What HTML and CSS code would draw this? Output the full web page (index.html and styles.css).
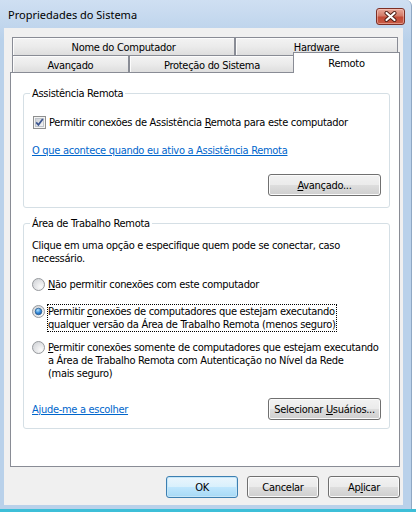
FILE: index.html
```html
<!DOCTYPE html>
<html lang="pt-BR">
  <head>
    <meta charset="UTF-8">
    <title>Propriedades do Sistema</title>
    <link rel="stylesheet" href="styles.css">
  </head>
  <body>

    <div class="window">
      <header class="titlebar">
        <span class="title">Propriedades do Sistema</span>
        <button class="close" aria-label="Fechar">
          <svg width="15" height="11" viewBox="0 0 15 11">
            <path d="M3.5 2 L11.5 9 M11.5 2 L3.5 9" stroke="#4a1c14" stroke-width="4" stroke-linecap="round"/>
            <path d="M3.5 2 L11.5 9 M11.5 2 L3.5 9" stroke="#ffffff" stroke-width="2.2" stroke-linecap="round"/>
          </svg>
        </button>
      </header>

      <main class="client">
        <nav class="tabstrip">
          <div class="tab-row">
            <span class="tab tab-name">Nome do Computador</span>
            <span class="tab tab-hw">Hardware</span>
          </div>
          <div class="tab-row">
            <span class="tab tab-adv">Avançado</span>
            <span class="tab tab-prot">Proteção do Sistema</span>
            <span class="tab tab-remote is-active">Remoto</span>
          </div>
        </nav>

        <section class="panel">
          <fieldset class="group group-assist">
            <legend>Assistência Remota</legend>
            <label class="check">
              <svg class="box" width="13" height="13" viewBox="0 0 13 13">
                <defs>
                  <linearGradient id="cb" x1="0" y1="0" x2="1" y2="1">
                    <stop offset="0" stop-color="#cbcfd5"/>
                    <stop offset="1" stop-color="#f6f6f6"/>
                  </linearGradient>
                </defs>
                <rect x="0.5" y="0.5" width="12" height="12" fill="#f4f4f4" stroke="#8e8f8f"/>
                <rect x="2.5" y="2.5" width="8" height="8" fill="url(#cb)" stroke="#bfc4ca"/>
                <path d="M3.2 6.4 L5.4 8.8 L9.8 3" stroke="#3b5590" stroke-width="1.7" fill="none"/>
              </svg>
              <span>Permitir conexões de Assistência <u>R</u>emota para este computador</span>
            </label>
            <a class="link" href="#">O que acontece quando eu ativo a Assistência Remota</a>
            <div class="group-foot">
              <button class="btn btn-wide"><u>A</u>vançado...</button>
            </div>
          </fieldset>

          <fieldset class="group group-desk">
            <legend>Área de Trabalho Remota</legend>
            <p class="hint">Clique em uma opção e especifique quem pode se conectar, caso<br>necessário.</p>

            <label class="radio opt-none">
              <svg class="dot" width="13" height="13" viewBox="0 0 13 13">
                <defs>
                  <radialGradient id="rb" cx="0.7" cy="0.7" r="0.8">
                    <stop offset="0" stop-color="#fbfbfb"/>
                    <stop offset="1" stop-color="#d2d4d8"/>
                  </radialGradient>
                </defs>
                <circle cx="6.5" cy="6.5" r="6" fill="url(#rb)" stroke="#979a9e"/>
              </svg>
              <span><u>N</u>ão permitir conexões com este computador</span>
            </label>

            <label class="radio opt-any">
              <svg class="dot" width="13" height="13" viewBox="0 0 13 13">
                <defs>
                  <radialGradient id="rs" cx="0.4" cy="0.3" r="0.8">
                    <stop offset="0" stop-color="#b8e6ff"/>
                    <stop offset="0.55" stop-color="#2f85d6"/>
                    <stop offset="1" stop-color="#1b4f9a"/>
                  </radialGradient>
                </defs>
                <circle cx="6.5" cy="6.5" r="6" fill="url(#rb)" stroke="#979a9e"/>
                <circle cx="6.5" cy="6.5" r="3.3" fill="url(#rs)" stroke="#2b5e8f" stroke-width="0.8"/>
              </svg>
              <span class="focus">Permitir <u>c</u>onexões de computadores que estejam executando<br>qualquer versão da Área de Trabalho Remota (menos seguro)</span>
            </label>

            <label class="radio opt-nla">
              <svg class="dot" width="13" height="13" viewBox="0 0 13 13">
                <circle cx="6.5" cy="6.5" r="6" fill="url(#rb)" stroke="#979a9e"/>
              </svg>
              <span><u>P</u>ermitir conexões somente de computadores que estejam executando<br>a Área de Trabalho Remota com Autenticação no Nível da Rede<br>(mais seguro)</span>
            </label>

            <div class="group-foot split">
              <a class="link" href="#">Ajude-me a escolher</a>
              <button class="btn btn-wide">Selecionar <u>U</u>suários...</button>
            </div>
          </fieldset>
        </section>

        <footer class="actions">
          <button class="btn btn-default">OK</button>
          <button class="btn">Cancelar</button>
          <button class="btn">Ap<u>l</u>icar</button>
        </footer>
      </main>
    </div>

    <div class="taskbar-edge"></div>

  </body>
</html>
```

FILE: styles.css
```css
:root {
  --clr-frame:      #b9d1ea;
  --clr-frame-top:  #cfdff2;
  --clr-client:     #f0f0f0;
  --clr-tab-border: #898c95;
  --clr-group:      #d5dfe5;
  --clr-link:       #0066cc;
  --clr-btn-border: #707070;
}

html, body {
  margin: 0;
  padding: 0;
}

*, *::before, *::after {
  box-sizing: border-box;
}

body {
  width: 416px;
  height: 512px;
  overflow: hidden;
  display: flex;
  flex-direction: column;
  background: #ffffff;
  color: #000;
  font: normal normal 11px/13px "DejaVu Sans Condensed", "DejaVu Sans", sans-serif;
  font-stretch: condensed;
  letter-spacing: -0.3px;
}

/* Window frame
 *
 */

.window {
  width: 412px;
  height: 509px;
  display: flex;
  flex-direction: column;
  padding-bottom: 4px;
  background: linear-gradient(var(--clr-frame-top), var(--clr-frame) 40px);
  border-right: 1px solid #8fa8c4;
  border-top-right-radius: 6px;
}

.taskbar-edge {
  height: 3px;
  background: #3dbfd8;
}

.titlebar {
  height: 28px;
  display: flex;
  align-items: flex-start;
  justify-content: space-between;
}

.title {
  padding: 7px 0 0 8px;
  font: 11px/16px "Noto Sans", "Open Sans", sans-serif;
  font-stretch: normal;
  letter-spacing: 0;
  color: #000;
}

.close {
  width: 29px;
  height: 17px;
  margin: 8px 6px 0 0;
  padding: 0;
  display: flex;
  align-items: center;
  justify-content: center;
  border: 1px solid #7d2f25;
  border-radius: 3px;
  background: linear-gradient(#e9a99b, #d27b69 45%, #c24a37 55%, #c75b45);
  box-shadow: inset 0 0 0 1px rgba(255, 220, 210, 0.45);
}

.client {
  flex: 1;
  margin: 0 8px 0 4px;
  padding: 9px 3px 7px 6px;
  display: flex;
  flex-direction: column;
  background: var(--clr-client);
}

/* Tabs
 *
 */

.tabstrip {
  padding-left: 2px;
}

.tab-row {
  display: flex;
}
.tab-row:first-child { height: 18px }
.tab-row:last-child  { height: 17px }

.tab {
  display: flex;
  align-items: center;
  justify-content: center;
  border: 1px solid var(--clr-tab-border);
  border-bottom: none;
  background: linear-gradient(#f3f3f3, #ebebeb 50%, #dedede);
  box-shadow: inset 1px 1px 0 #fcfcfc;
  white-space: nowrap;
}
.tab-row:first-child .tab { padding-top: 1px }
.tab-row:last-child .tab { padding-top: 2px }

.tab-name   { width: 223px }
.tab-hw     { width: 163px }
.tab-adv    { width: 117px }
.tab-prot   { width: 166px }
.tab-remote { width: 107px }

.tab.is-active {
  position: relative;
  z-index: 1;
  height: 21px;
  margin: -3px -3px -1px -2px;
  padding-top: 0;
  padding-bottom: 1px;
  background: #fff;
  box-shadow: none;
}

/* Page
 *
 */

.panel {
  height: 395px;
  padding: 14px 9px 0 12px;
  border: 1px solid var(--clr-tab-border);
  background: #fff;
}

.group {
  margin: 0;
  padding: 16px 8px 11px 8px;
  border: 1px solid var(--clr-group);
  border-radius: 3px;
  display: flex;
  flex-direction: column;
  align-items: flex-start;
}

.group legend {
  margin-left: -2px;
  padding: 0 2px;
}

.group-desk {
  margin-top: 9px;
  padding-top: 9px;
  padding-bottom: 8px;
}

.check, .radio {
  display: flex;
  align-items: flex-start;
}

.check .box {
  margin: 0 3px 0 1px;
  flex: none;
}

.radio .dot {
  margin: 0 3px 0 0;
  flex: none;
}

.link {
  color: var(--clr-link);
  text-decoration: underline;
}

.group-assist .link {
  margin-top: 15px;
}

.group-foot {
  align-self: stretch;
  display: flex;
  justify-content: flex-end;
  align-items: center;
  margin-top: 17px;
}

.group-foot.split {
  justify-content: space-between;
  margin-top: 18px;
}

.hint {
  margin: 0;
  white-space: nowrap;
}

.opt-none { margin-top: 13px }
.opt-any  { margin-top: 13px }
.opt-nla  { margin-top: 9px }

.opt-any .dot { margin-top: 1px }

.radio span {
  white-space: nowrap;
}

.radio span.focus {
  margin-left: -1px;
  border: 1px dotted #000;
}

u {
  text-decoration: underline;
  text-underline-offset: 1px;
}

/* Buttons
 *
 */

.btn {
  width: 72px;
  height: 22px;
  padding: 0;
  font: inherit;
  letter-spacing: inherit;
  color: #000;
  border: 1px solid var(--clr-btn-border);
  border-radius: 3px;
  background: linear-gradient(#f2f2f2, #ebebeb 48%, #dddddd 52%, #cfcfcf);
  box-shadow: inset 0 0 0 1px #fbfbfb;
}

.btn-wide {
  width: 113px;
  margin-right: 0;
}

.btn-default {
  border-color: #3c7fb1;
  background: linear-gradient(#eaf6fd, #d9f0fc 48%, #bee6fd 52%, #a7d9f5);
  box-shadow: inset 0 0 0 1px #c5e6f8;
}

.actions {
  margin-top: 9px;
  display: flex;
  justify-content: flex-end;
  gap: 9px;
}
```
